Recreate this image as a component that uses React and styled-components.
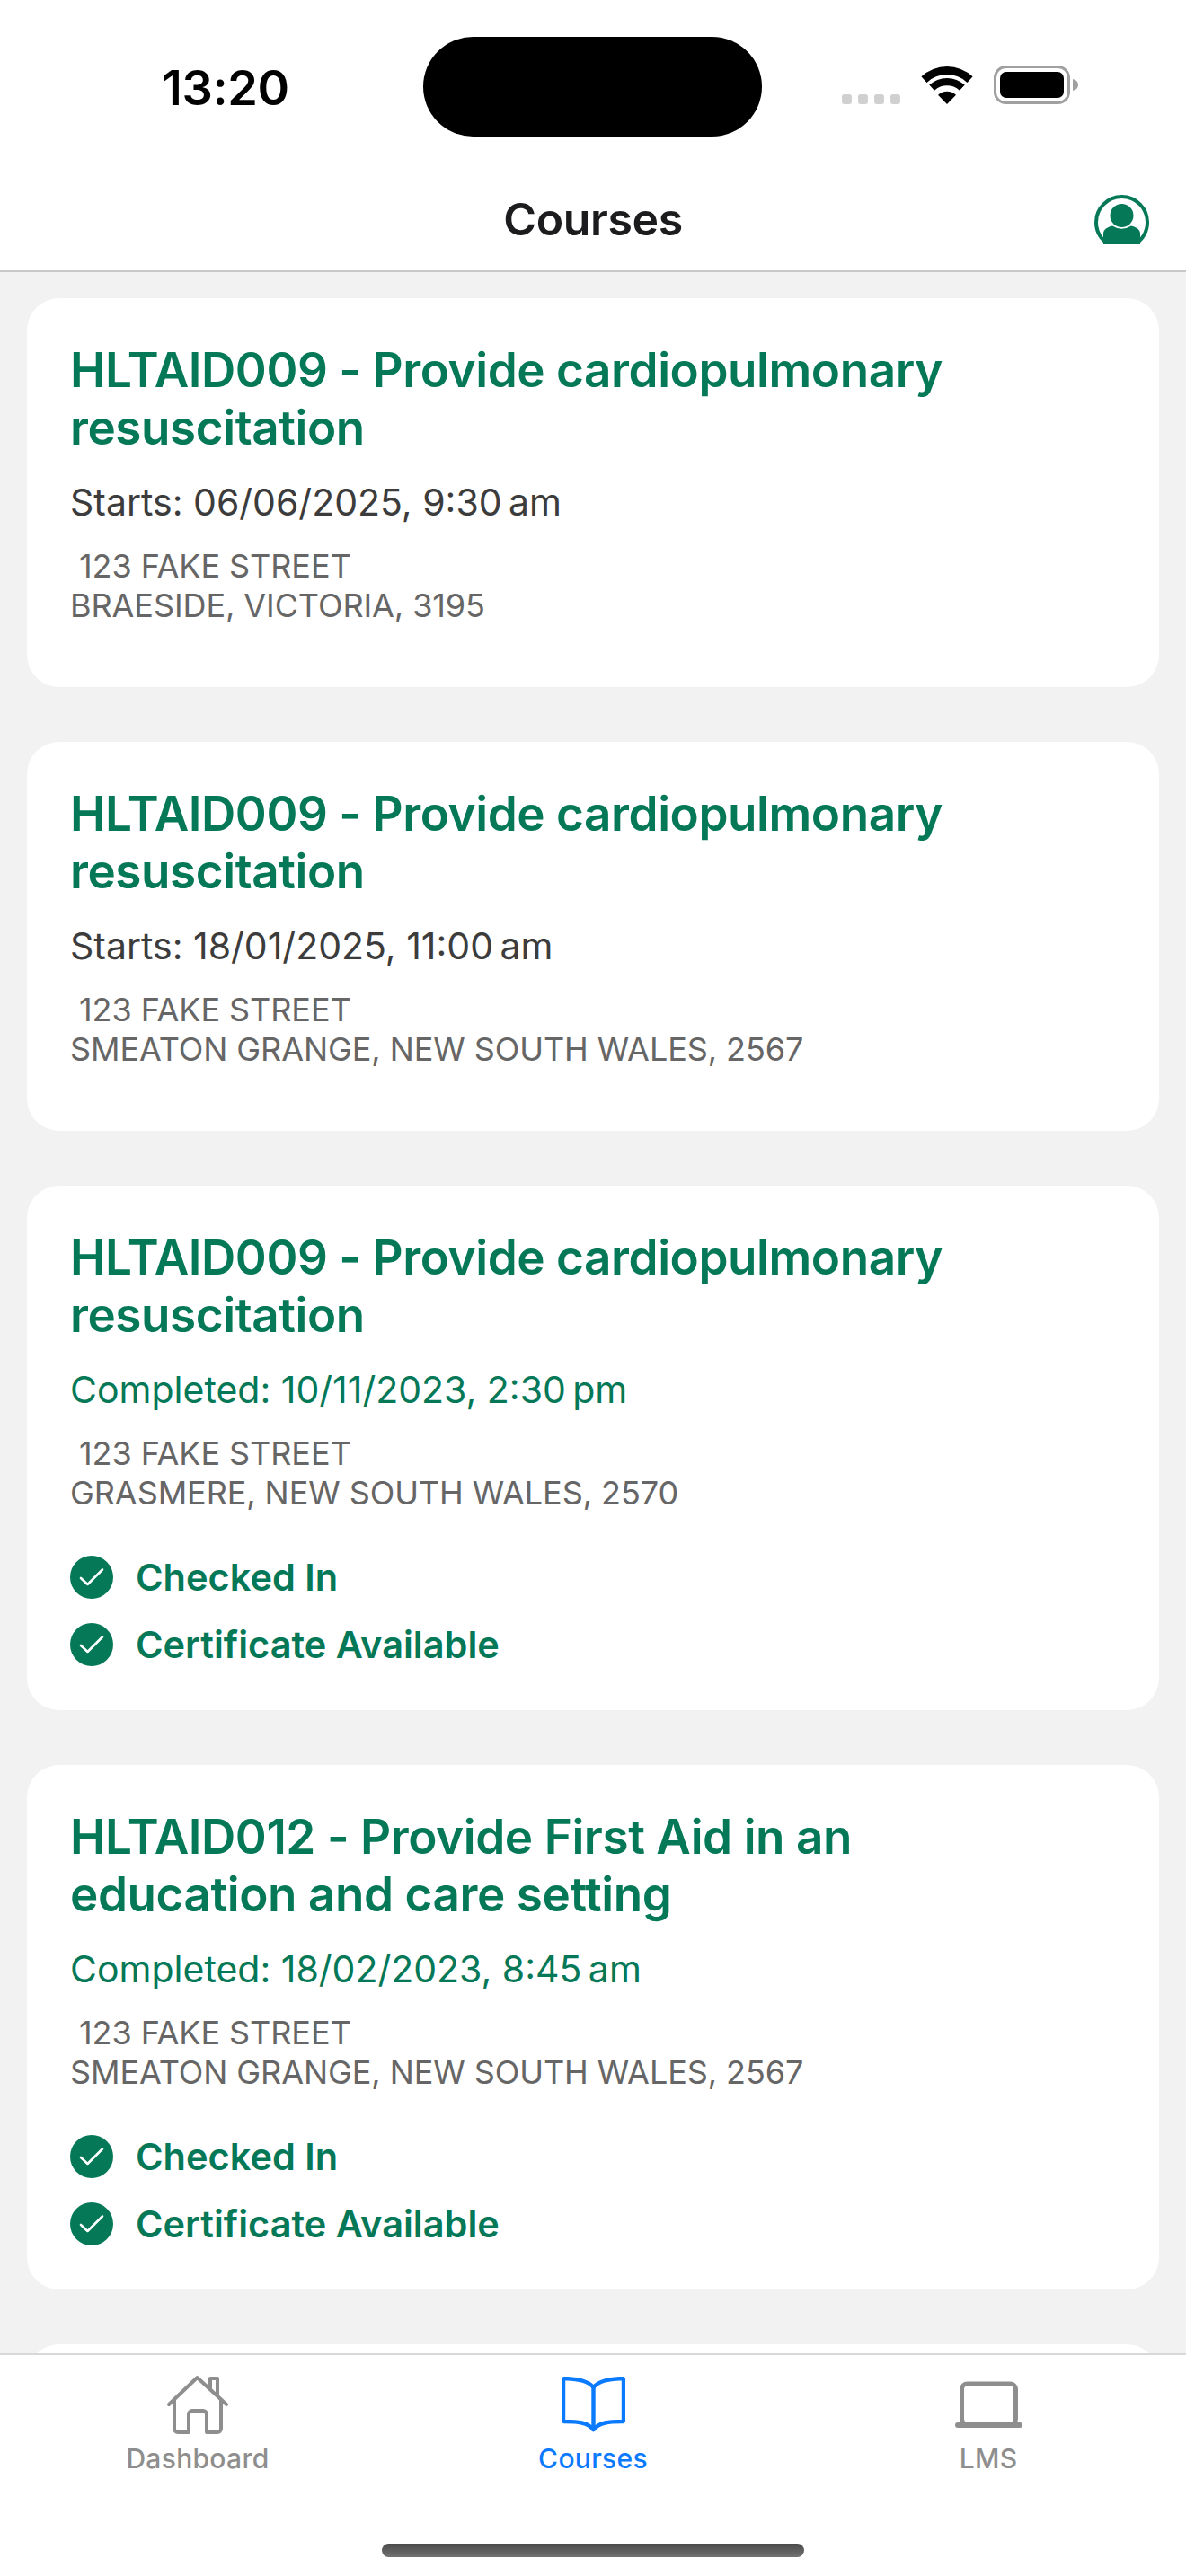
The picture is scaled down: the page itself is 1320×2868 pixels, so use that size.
import React from 'react';
import styled, { createGlobalStyle } from 'styled-components';

const GREEN = '#047857';
const TAB_GREY = '#8e8e8e';
const BLUE = '#0a7aff';

const GlobalStyle = createGlobalStyle`
    html, body {
        margin: 0;
        padding: 0;
        background: #ffffff;
    }
    * {
        box-sizing: border-box;
    }
`;

const Screen = styled.div`
    width: 1320px;
    height: 2868px;
    display: flex;
    flex-direction: column;
    overflow: hidden;
    background: #f2f2f2;
    font-family: Inter, "Liberation Sans", sans-serif;
`;

const Header = styled.header`
    flex: none;
    height: 303px;
    background: #ffffff;
    border-bottom: 2px solid #c8c8c8;
`;

const StatusBar = styled.div`
    height: 152px;
    padding-top: 41px;
    display: grid;
    grid-template-columns: 471px 377px 1fr;
`;

const Time = styled.div`
    padding: 36px 0 0 180px;
    font-size: 54px;
    line-height: 42px;
    font-weight: 600;
    color: #000000;
    letter-spacing: -0.4px;
`;

const Island = styled.div`
    height: 111px;
    border-radius: 56px;
    background: #000000;
`;

const StatusIcons = styled.div`
    height: 75px;
    padding: 32px 0 0 89px;
    display: flex;
    align-items: flex-end;
`;

const SignalDots = styled.div`
    display: flex;
    gap: 7px;
    margin-right: 23px;
`;

const SignalDot = styled.span`
    width: 11px;
    height: 11px;
    border-radius: 3px;
    background: #d0d0d0;
`;

const Battery = styled.svg`
    margin-left: 23px;
`;

const NavBar = styled.div`
    height: 149px;
    padding: 64px 41px 0;
    display: grid;
    grid-template-columns: 1fr auto 1fr;
`;

const NavTitle = styled.h1`
    grid-column: 2;
    margin: 0;
    font-size: 50px;
    line-height: 56px;
    font-weight: 600;
    color: #1c1c1e;
    letter-spacing: -0.4px;
`;

const ProfileButton = styled.div`
    grid-column: 3;
    justify-self: end;
    height: 55px;
    margin-top: 1px;
`;

const CourseList = styled.main`
    flex: 1;
    min-height: 0;
    overflow: hidden;
    padding: 29px 30px 0;
    display: flex;
    flex-direction: column;
    gap: 61px;
`;

const Card = styled.article`
    flex: none;
    padding: 48px 48px 49px;
    border-radius: 36px;
    background: #ffffff;
`;

const CourseTitle = styled.h2`
    max-width: 1060px;
    margin: 0;
    font-size: 53px;
    line-height: 64px;
    font-weight: 600;
    color: ${GREEN};
    letter-spacing: -0.43px;
`;

const DateLine = styled.p`
    margin: 27px 0 0;
    font-size: 41px;
    line-height: 48px;
    font-weight: 400;
    color: ${props => (props.$done ? GREEN : '#3c3c3c')};
`;

const Address = styled.p`
    margin: 25px 0 0;
    font-size: 36px;
    line-height: 44px;
    color: #666666;
    letter-spacing: -0.08px;
    white-space: pre-line;
`;

const Spacer = styled.div`
    height: 20px;
`;

const BadgeList = styled.div`
    margin-top: 48px;
    display: flex;
    flex-direction: column;
    gap: 27px;
`;

const Badge = styled.div`
    display: flex;
    align-items: center;
    gap: 25px;
    height: 48px;
    font-size: 41.5px;
    font-weight: 600;
    color: ${GREEN};
`;

const TabBar = styled.nav`
    flex: none;
    height: 248px;
    background: #ffffff;
    border-top: 2px solid #d8d8d8;
    display: flex;
    flex-direction: column;
`;

const Tabs = styled.div`
    height: 135px;
    display: grid;
    grid-template-columns: repeat(3, 1fr);
`;

const Tab = styled.div`
    display: flex;
    flex-direction: column;
    align-items: center;
    color: ${props => (props.$active ? BLUE : TAB_GREY)};
`;

const TabIcon = styled.div`
    height: 74px;
    margin-top: 18px;
    display: flex;
    align-items: center;
    justify-content: center;
`;

const TabLabel = styled.span`
    margin-top: 5px;
    font-size: 30px;
    line-height: 36px;
    font-weight: 500;
    letter-spacing: 0.3px;
`;

const HomeIndicator = styled.div`
    width: 470px;
    height: 15px;
    margin: 75px auto 0;
    border-radius: 8px;
    background: linear-gradient(#4a4a4a, #727272);
`;

function WifiIcon() {
    return (
        <svg width="58" height="42" viewBox="0 0 58 42" fill="#000000">
            <path d="M0.4 11.3 A42 42 0 0 1 57.6 11.3 L51.5 17.9 A33 33 0 0 0 6.5 17.9 Z" />
            <path d="M9.2 20.6 A29.5 29.5 0 0 1 48.8 20.6 L43 26.7 A21 21 0 0 0 15 26.7 Z" />
            <path d="M19 31.8 A14.5 14.5 0 0 1 39 31.8 L29 42 Z" />
        </svg>
    );
}

function BatteryIcon() {
    return (
        <Battery width="94" height="43" viewBox="0 0 94 43">
            <rect x="1.5" y="1.5" width="82" height="40" rx="12" fill="none" stroke="#a0a0a0" strokeWidth="3" />
            <rect x="7" y="7" width="71" height="29" rx="7" fill="#000000" />
            <path d="M88 15 C92 16 94 18 94 21.5 C94 25 92 27 88 28 Z" fill="#a0a0a0" />
        </Battery>
    );
}

function ProfileIcon() {
    return (
        <svg width="61" height="55" viewBox="0 0 61 55" fill={GREEN}>
            <circle cx="30.5" cy="30.5" r="28.5" fill="none" stroke={GREEN} strokeWidth="4" />
            <circle cx="30.5" cy="23" r="13" />
            <path d="M10 55 V43 Q10 37 20 34.5 Q30.5 41 41 34.5 Q51 37 51 43 V55 Z" />
        </svg>
    );
}

function CheckIcon() {
    return (
        <svg width="48" height="48" viewBox="0 0 48 48">
            <circle cx="24" cy="24" r="24" fill={GREEN} />
            <path d="M12 25 L19.5 32 L36 15.5" fill="none" stroke="#ffffff" strokeWidth="2.6" strokeLinecap="round" strokeLinejoin="round" />
        </svg>
    );
}

function HomeIcon() {
    return (
        <svg width="70" height="67" viewBox="0 0 70 67" fill="none" stroke="currentColor" strokeWidth="4" strokeLinecap="round" strokeLinejoin="round">
            <path d="M3 33 L34.5 3 L67 33" />
            <path d="M9 28 V60 a4 4 0 0 0 4 4 H25 V44 a4 4 0 0 1 4 -4 H41 a4 4 0 0 1 4 4 V64 H57 a4 4 0 0 0 4 -4 V28" />
            <path d="M49 15 V4 H57 V22" />
        </svg>
    );
}

function BookIcon() {
    return (
        <svg width="71" height="62" viewBox="0 0 71 62" fill="none" stroke="currentColor" strokeWidth="4.4" strokeLinecap="round" strokeLinejoin="round">
            <path d="M35.5 12 C30 5 20 3 4 2 Q2 2 2 4 V48 Q2 50 4 50 C18 50 29 51 35.5 59 C42 51 53 50 67 50 Q69 50 69 48 V4 Q69 2 67 2 C51 3 41 5 35.5 12 Z" />
            <path d="M35.5 12 V59" />
        </svg>
    );
}

function LaptopIcon() {
    return (
        <svg width="75" height="53" viewBox="0 0 75 53">
            <rect x="7.5" y="3" width="60" height="45" rx="6" fill="none" stroke="currentColor" strokeWidth="5" />
            <rect x="0" y="46" width="75" height="6" rx="3" fill="currentColor" />
        </svg>
    );
}

const courses = [
    {
        title: 'HLTAID009 - Provide cardiopulmonary resuscitation',
        date: 'Starts: 06/06/2025, 9:30\u202Fam',
        city: 'BRAESIDE, VICTORIA, 3195',
    },
    {
        title: 'HLTAID009 - Provide cardiopulmonary resuscitation',
        date: 'Starts: 18/01/2025, 11:00\u202Fam',
        city: 'SMEATON GRANGE, NEW SOUTH WALES, 2567',
    },
    {
        title: 'HLTAID009 - Provide cardiopulmonary resuscitation',
        date: 'Completed: 10/11/2023, 2:30\u202Fpm',
        city: 'GRASMERE, NEW SOUTH WALES, 2570',
        done: true,
    },
    {
        title: 'HLTAID012 - Provide First Aid in an education and care setting',
        date: 'Completed: 18/02/2023, 8:45\u202Fam',
        city: 'SMEATON GRANGE, NEW SOUTH WALES, 2567',
        done: true,
    },
];

export default function App() {
    return (
        <Screen>
            <GlobalStyle />
            <Header>
                <StatusBar>
                    <Time>13:20</Time>
                    <Island />
                    <StatusIcons>
                        <SignalDots>
                            <SignalDot />
                            <SignalDot />
                            <SignalDot />
                            <SignalDot />
                        </SignalDots>
                        <WifiIcon />
                        <BatteryIcon />
                    </StatusIcons>
                </StatusBar>
                <NavBar>
                    <NavTitle>Courses</NavTitle>
                    <ProfileButton>
                        <ProfileIcon />
                    </ProfileButton>
                </NavBar>
            </Header>
            <CourseList>
                {courses.map((course, i) => (
                    <Card key={i}>
                        <CourseTitle>{course.title}</CourseTitle>
                        <DateLine $done={course.done}>{course.date}</DateLine>
                        <Address>{'\u00A0123 FAKE STREET\n' + course.city}</Address>
                        {course.done ? (
                            <BadgeList>
                                <Badge><CheckIcon />Checked In</Badge>
                                <Badge><CheckIcon />Certificate Available</Badge>
                            </BadgeList>
                        ) : (
                            <Spacer />
                        )}
                    </Card>
                ))}
                {/* next card, only its top edge shows above the tab bar */}
                <Card />
            </CourseList>
            <TabBar>
                <Tabs>
                    <Tab>
                        <TabIcon><HomeIcon /></TabIcon>
                        <TabLabel>Dashboard</TabLabel>
                    </Tab>
                    <Tab $active>
                        <TabIcon><BookIcon /></TabIcon>
                        <TabLabel>Courses</TabLabel>
                    </Tab>
                    <Tab>
                        <TabIcon><LaptopIcon /></TabIcon>
                        <TabLabel>LMS</TabLabel>
                    </Tab>
                </Tabs>
                <HomeIndicator />
            </TabBar>
        </Screen>
    );
}
